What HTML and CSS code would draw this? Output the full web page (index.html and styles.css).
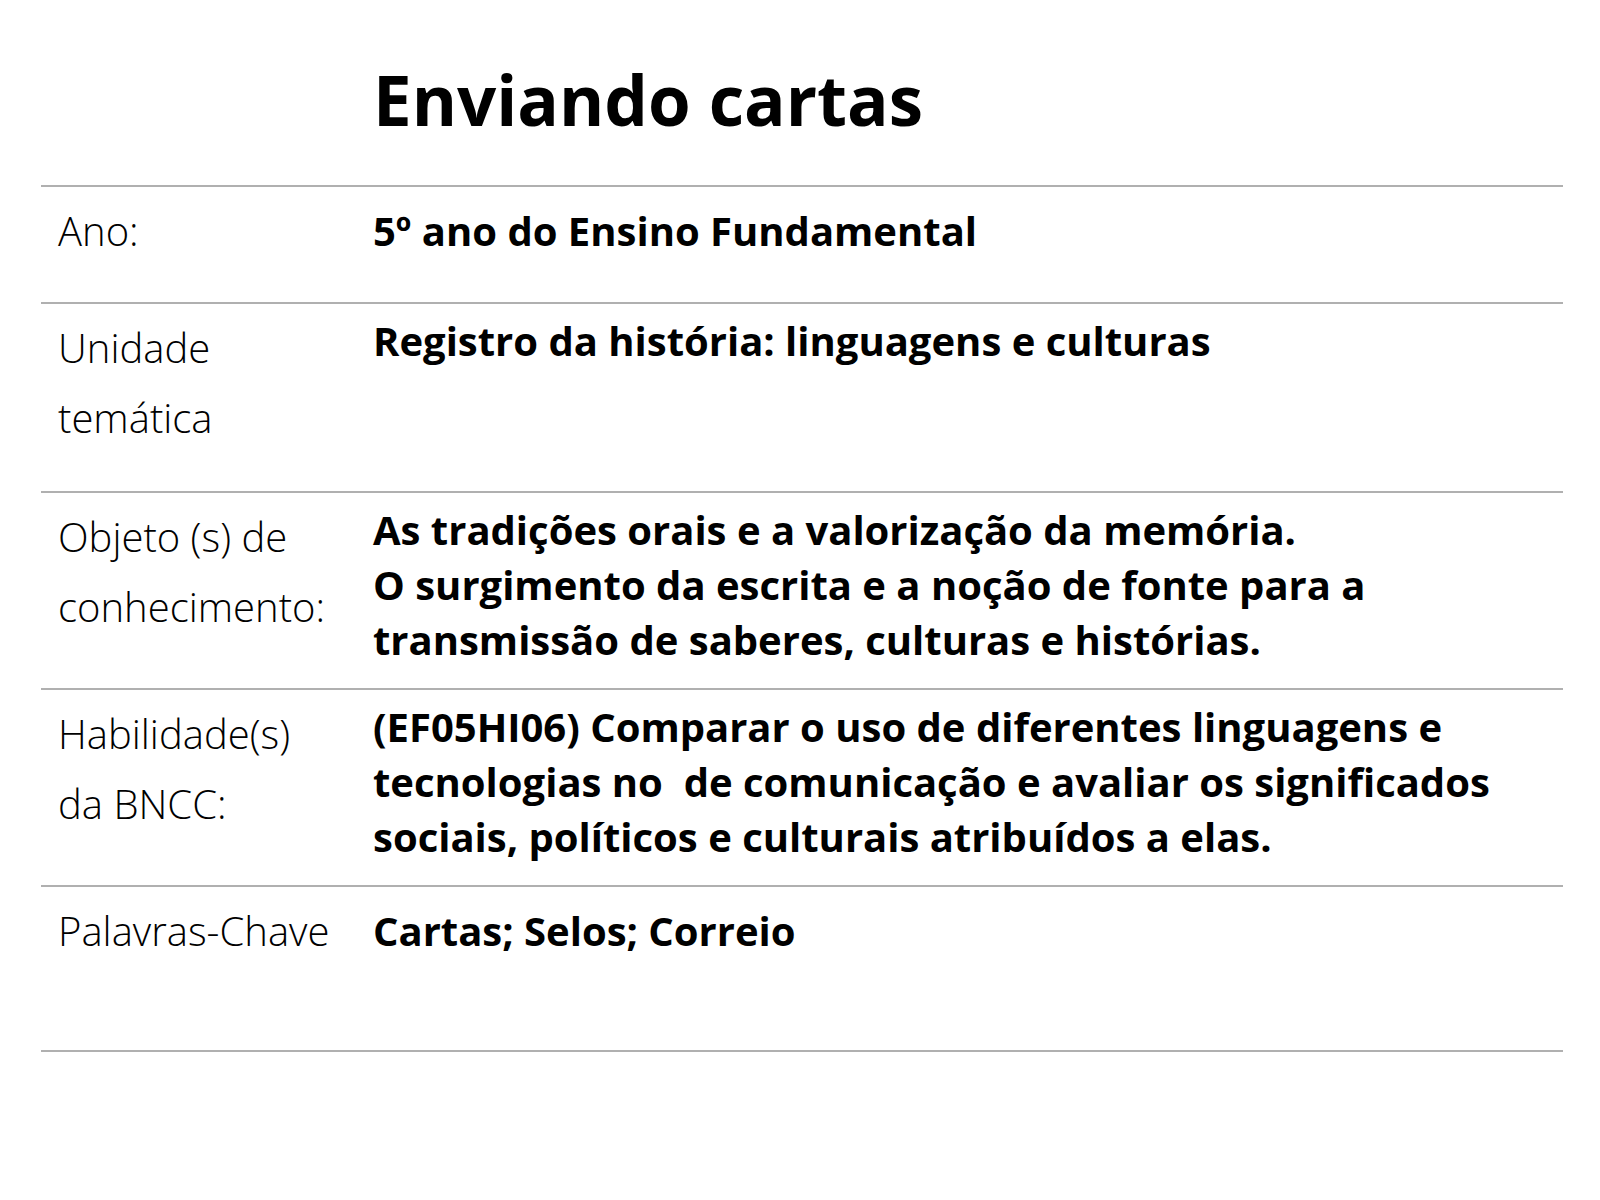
FILE: index.html
```html
<!DOCTYPE html>
<html lang="pt-BR">
<head>
<meta charset="utf-8">
<title>Enviando cartas</title>
<link rel="stylesheet" href="styles.css">
</head>
<body>
<main class="sheet">
  <header class="sheet-header">
    <h1 class="sheet-title">Enviando cartas</h1>
  </header>
  <section class="info-table">
    <div class="info-row info-row--single info-row--h117">
      <div class="info-label">Ano:</div>
      <div class="info-value">5º ano do Ensino Fundamental</div>
    </div>
    <div class="info-row info-row--h189">
      <div class="info-label">Unidade<br>temática</div>
      <div class="info-value">Registro da história: linguagens e culturas</div>
    </div>
    <div class="info-row">
      <div class="info-label">Objeto (s) de<br>conhecimento:</div>
      <div class="info-value">As tradições orais e a valorização da memória.<br>O surgimento da escrita e a noção de fonte para a transmissão de saberes, culturas e histórias.</div>
    </div>
    <div class="info-row">
      <div class="info-label">Habilidade(s)<br>da BNCC:</div>
      <div class="info-value">(EF05HI06) Comparar o uso de diferentes linguagens e tecnologias no &nbsp;de comunicação e avaliar os significados sociais, políticos e culturais atribuídos a elas.</div>
    </div>
    <div class="info-row info-row--single info-row--h165">
      <div class="info-label">Palavras-Chave</div>
      <div class="info-value">Cartas; Selos; Correio</div>
    </div>
  </section>
</main>
</body>
</html>
```

FILE: styles.css
```css
* {
  box-sizing: border-box;
}

html, body {
  margin: 0;
  padding: 0;
  background: #ffffff;
}

body {
  font-family: "Open Sans", "Noto Sans", "Liberation Sans", sans-serif;
  color: #000000;
  width: 1600px;
  height: 1200px;
  overflow: hidden;
}

.sheet {
  margin: 0 37px 0 41px;
}

.sheet-header {
  padding: 58px 0 0 332px;
  margin-bottom: 44px;
}

.sheet-title {
  margin: 0;
  font-size: 69px;
  line-height: 83px;
  font-weight: 700;
  letter-spacing: 0;
}

.info-table {
  border-top: 2px solid #b0b0b0;
}

.info-row {
  display: grid;
  grid-template-columns: 315px 1fr;
  padding: 9px 0 21px 17px;
  border-bottom: 2px solid #b0b0b0;
}

.info-row--h117 { min-height: 117px; }
.info-row--h189 { min-height: 189px; }
.info-row--h165 { min-height: 165px; }

.info-label {
  font-size: 40px;
  line-height: 70px;
  font-weight: 300;
  white-space: nowrap;
}

.info-value {
  font-size: 40px;
  line-height: 55px;
  font-weight: 700;
  padding-right: 20px;
  max-width: 1175px;
}

.info-row--single .info-value {
  line-height: 70px;
}
```
